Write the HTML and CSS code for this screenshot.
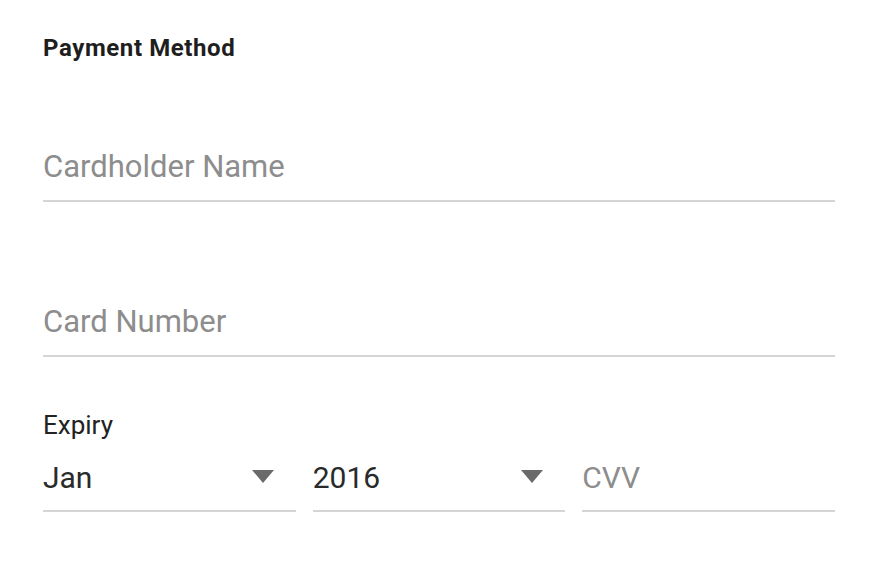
FILE: index.html
```html
<!DOCTYPE html>
<html lang="en">
<head>
<meta charset="utf-8">
<title>Payment Method</title>
<link rel="stylesheet" href="styles.css">
</head>
<body>
<form class="payment">
  <h2 class="title">Payment Method</h2>
  <div class="field field-first">
    <span class="placeholder">Cardholder Name</span>
  </div>
  <div class="field field-second">
    <span class="placeholder">Card Number</span>
  </div>
  <div class="label">Expiry</div>
  <div class="row">
    <div class="field select">
      <span class="value">Jan</span>
      <svg class="arrow" viewBox="0 0 22 13" width="22" height="13"><path d="M0 0H22L11 13Z" fill="#6a6a6a"/></svg>
    </div>
    <div class="field select">
      <span class="value">2016</span>
      <svg class="arrow" viewBox="0 0 22 13" width="22" height="13"><path d="M0 0H22L11 13Z" fill="#6a6a6a"/></svg>
    </div>
    <div class="field">
      <span class="placeholder small">CVV</span>
    </div>
  </div>
</form>
</body>
</html>
```
FILE: styles.css
```css
html, body {
  margin: 0;
  padding: 0;
  background: #ffffff;
}

body {
  font-family: Roboto, "Liberation Sans", Arial, sans-serif;
  color: #222;
}

.payment {
  width: 792px;
  padding: 34px 0 0 43px;
  display: flex;
  flex-direction: column;
}

.title {
  margin: 0;
  font-size: 24px;
  line-height: 28px;
  font-weight: 700;
  letter-spacing: 0.6px;
  color: #1e1e1e;
}

.label {
  font-size: 26px;
  line-height: 30px;
  color: #222;
  margin-top: 53px;
}

.field {
  font-size: 31px;
  line-height: 36px;
  padding-bottom: 15px;
  border-bottom: 2px solid #d5d5d5;
  display: flex;
  align-items: center;
}

.field-first {
  margin-top: 87px;
}

.field-second {
  margin-top: 102px;
}

.placeholder {
  color: #8d8d8d;
}

.placeholder.small {
  font-size: 30px;
}

.value {
  color: #2a2a2a;
  font-size: 30px;
  flex: 1;
}

.row {
  margin-top: 20px;
  display: grid;
  grid-template-columns: 1fr 1fr 1fr;
  gap: 17px;
}

.row .field {
  padding-bottom: 14px;
}

.arrow {
  margin-right: 22px;
  margin-top: -4px;
}
```
